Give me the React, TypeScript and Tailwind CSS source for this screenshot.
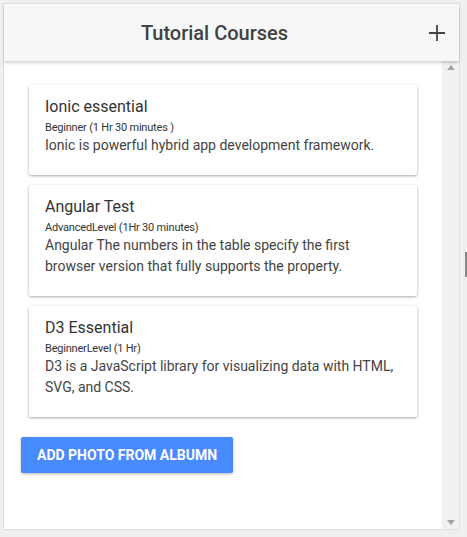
import React from "react";

const courses = [
  {
    title: "Ionic essential",
    level: "Beginner (1 Hr 30 minutes )",
    desc: "Ionic is powerful hybrid app development framework.",
  },
  {
    title: "Angular Test",
    level: "AdvancedLevel (1Hr 30 minutes)",
    desc: "Angular The numbers in the table specify the first browser version that fully supports the property.",
  },
  {
    title: "D3 Essential",
    level: "BeginnerLevel (1 Hr)",
    desc: "D3 is a JavaScript library for visualizing data with HTML, SVG, and CSS.",
  },
];

export default function App() {
  return (
    <div
      className="relative w-[467px] h-[537px] bg-[#efefef] pt-[3px] pl-[3px]"
      style={{ fontFamily: "Roboto, 'Noto Sans', sans-serif" }}
    >
      <div className="w-[457px] h-[527px] flex flex-col bg-white border border-[#e0e0e0]">
        <div className="relative z-10 h-[57px] shrink-0 flex items-center justify-center pr-[34px] bg-[#f7f7f7] shadow-[0_2px_3px_rgba(0,0,0,0.18)]">
          <span className="text-[20px] font-medium text-[#424242]">Tutorial Courses</span>
          <svg
            className="absolute right-[13px] top-[20px]"
            width="18"
            height="18"
            viewBox="0 0 18 18"
          >
            <path d="M9 1V17M1 9H17" stroke="#444" strokeWidth="1.8" />
          </svg>
        </div>
        <div className="flex flex-1 min-h-0">
          <div className="flex-1 pt-[24px] px-[17px]">
            <div className="flex flex-col gap-[10px] mx-[8px]">
              {courses.map((c) => (
                <div
                  key={c.title}
                  className="bg-white rounded-[2px] pt-[12px] pb-[19px] px-[16px] shadow-[0_1px_3px_rgba(0,0,0,0.35)]"
                >
                  <div className="text-[16px] leading-[20px] text-[#333]">{c.title}</div>
                  <div className="mt-[4px] text-[11px] leading-[14px] text-[#333] tracking-[-0.2px]">
                    {c.level}
                  </div>
                  <div className="text-[14px] leading-[21px] text-[#444]">{c.desc}</div>
                </div>
              ))}
            </div>
            <button className="mt-[20px] h-[36px] px-[16px] rounded-[2px] bg-[#488aff] text-white text-[14px] font-bold uppercase shadow-[0_1px_3px_rgba(0,0,0,0.3)]">
              Add photo from albumn
            </button>
          </div>
          <div className="w-[17px] bg-[#f1f1f1] flex flex-col justify-between items-center py-[4px]">
            <svg width="8" height="5" viewBox="0 0 8 5">
              <path d="M0 5L4 0L8 5Z" fill="#a3a3a3" />
            </svg>
            <svg width="8" height="5" viewBox="0 0 8 5">
              <path d="M0 0L4 5L8 0Z" fill="#a3a3a3" />
            </svg>
          </div>
        </div>
      </div>
      <div className="absolute right-0 top-[252px] w-[2px] h-[25px] bg-[#8a8a8a]" />
    </div>
  );
}
